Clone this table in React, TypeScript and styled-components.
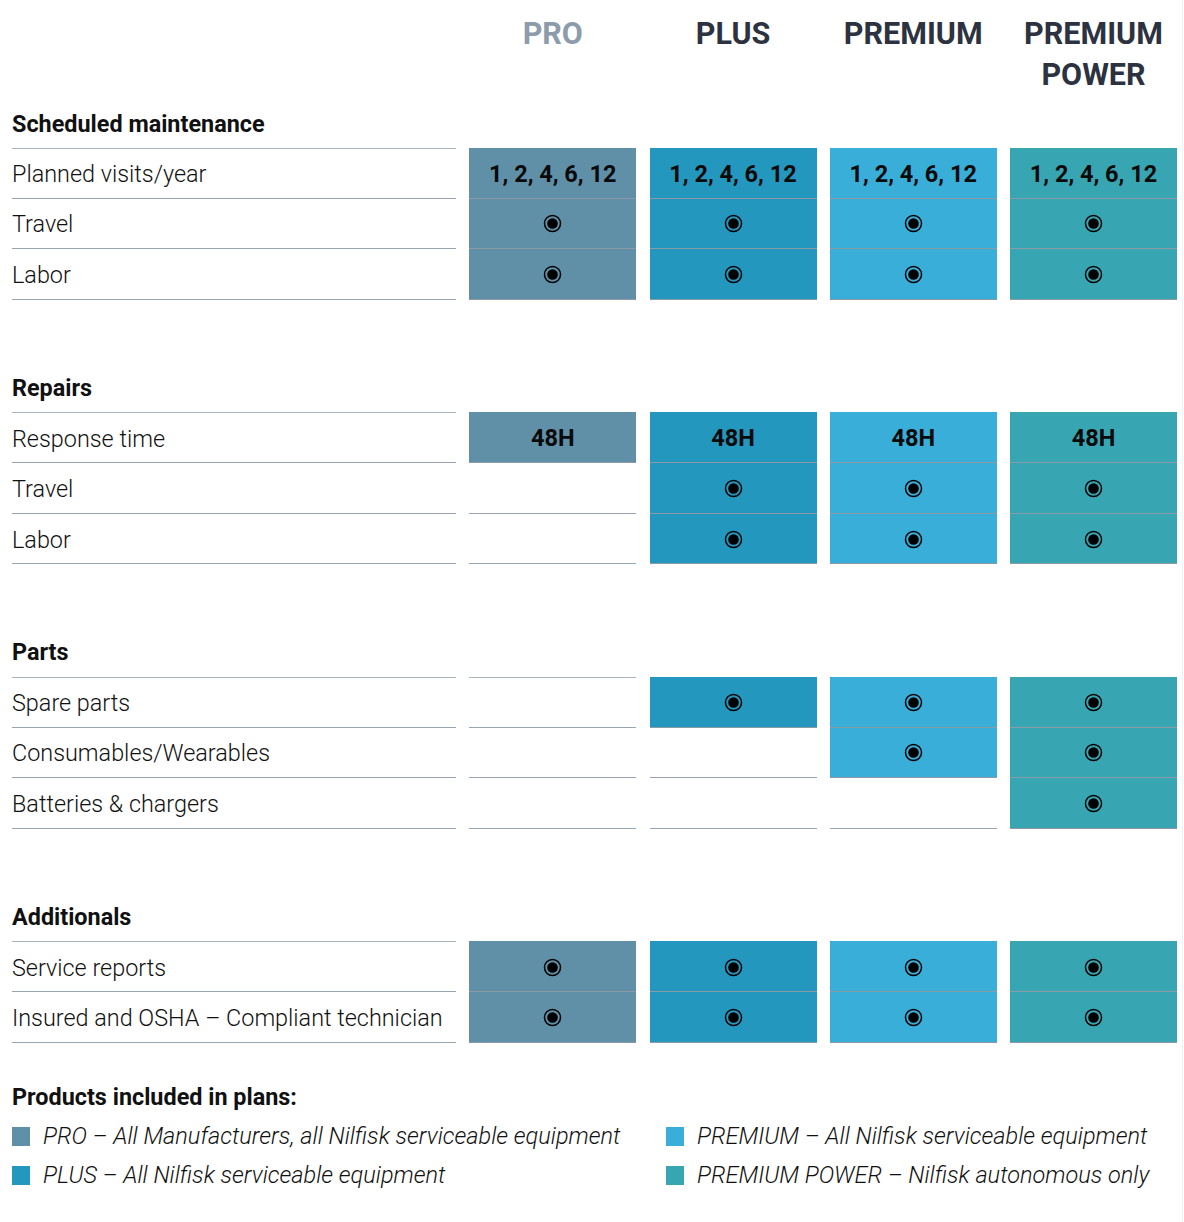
import React from "react";
import styled, { createGlobalStyle } from "styled-components";

const Global = createGlobalStyle`
  html, body { margin: 0; padding: 0; background: #ffffff; }
  body { font-family: Roboto, "Liberation Sans", Arial, sans-serif; color: #111; }
`;

type Plan = "pro" | "plus" | "premium" | "power";
const planColor: Record<Plan, string> = {
  pro: "#6090a7",
  plus: "#2497bf",
  premium: "#39aed9",
  power: "#38a6b2",
};
const plans: Plan[] = ["pro", "plus", "premium", "power"];

const Page = styled.div`
  width: 1184px;
  padding: 13px 0 30px 12px;
  box-sizing: border-box;
  position: relative;
`;

const Grid = styled.div`
  display: grid;
  grid-template-columns: 444px repeat(4, 167px);
  column-gap: 13.25px;
`;

const HeaderCell = styled.div<{ $muted?: boolean }>`
  font-weight: 700;
  font-size: 30.5px;
  line-height: 41px;
  text-align: center;
  color: ${(p) => (p.$muted ? "#8c9cab" : "#2d3240")};
  height: 85px;
`;

const Section = styled.div<{ $first?: boolean }>`
  margin-top: ${(p) => (p.$first ? "0" : "62.5px")};
`;

const SectionTitle = styled.div`
  height: 50px;
  padding-top: 1px;
  box-sizing: border-box;
  display: flex;
  align-items: center;
  font-weight: 700;
  font-size: 23.4px;
  color: #111;
`;

const Column = styled.div`
  display: flex;
  flex-direction: column;
`;

const LabelCell = styled.div<{ $first?: boolean }>`
  height: 50.67px;
  padding-top: 2px;
  box-sizing: border-box;
  display: flex;
  align-items: center;
  font-size: 23.4px;
  font-weight: 300;
  color: #111;
  border-bottom: 1px solid #97a4b1;
  ${(p) => (p.$first ? "border-top: 1px solid #aab4be;" : "")}
`;

const ValueCell = styled.div<{ $bg?: string; $first?: boolean }>`
  height: 50.67px;
  padding-top: 1px;
  box-sizing: border-box;
  display: flex;
  align-items: center;
  justify-content: center;
  background: ${(p) => p.$bg ?? "transparent"};
  font-weight: 700;
  font-size: 23.5px;
  color: #0a0a0a;
  border-bottom: 1px solid ${(p) => (p.$bg ? "#8d9aa6" : "#97a4b1")};
  ${(p) => (p.$first ? `border-top: 1px solid ${p.$bg ? p.$bg : "#aab4be"};` : "")}
`;

const Legend = styled.div`
  margin-top: 34px;
`;

const LegendTitle = styled.div`
  font-weight: 700;
  font-size: 23.4px;
  height: 40px;
  display: flex;
  align-items: center;
  color: #111;
`;

const LegendGrid = styled.div`
  display: grid;
  grid-template-columns: 654px auto;
`;

const LegendItem = styled.div`
  display: flex;
  align-items: center;
  height: 39px;
  gap: 13px;
  font-style: italic;
  font-weight: 300;
  font-size: 23.5px;
  color: #111;
`;

const Swatch = styled.span<{ $bg: string }>`
  width: 18px;
  height: 19px;
  background: ${(p) => p.$bg};
  flex: none;
`;

const EdgeLine = styled.div`
  position: absolute;
  top: 0;
  right: 1px;
  width: 1px;
  height: 100%;
  background: #f1f3f5;
`;

const Dot = () => (
  <svg width="19" height="19" viewBox="0 0 18 18" aria-hidden>
    <circle cx="9" cy="9" r="7.6" fill="none" stroke="#000" strokeWidth="1.4" />
    <circle cx="9" cy="9" r="5" fill="#000" />
  </svg>
);

type Val = null | "dot" | string;
type Row = { label: string; values: Val[] };
type Sec = { title: string; rows: Row[] };

const D = "dot";
const visits = "1, 2, 4, 6, 12";
const sections: Sec[] = [
  {
    title: "Scheduled maintenance",
    rows: [
      { label: "Planned visits/year", values: [visits, visits, visits, visits] },
      { label: "Travel", values: [D, D, D, D] },
      { label: "Labor", values: [D, D, D, D] },
    ],
  },
  {
    title: "Repairs",
    rows: [
      { label: "Response time", values: ["48H", "48H", "48H", "48H"] },
      { label: "Travel", values: [null, D, D, D] },
      { label: "Labor", values: [null, D, D, D] },
    ],
  },
  {
    title: "Parts",
    rows: [
      { label: "Spare parts", values: [null, D, D, D] },
      { label: "Consumables/Wearables", values: [null, null, D, D] },
      { label: "Batteries & chargers", values: [null, null, null, D] },
    ],
  },
  {
    title: "Additionals",
    rows: [
      { label: "Service reports", values: [D, D, D, D] },
      { label: "Insured and OSHA – Compliant technician", values: [D, D, D, D] },
    ],
  },
];

export default function App() {
  return (
    <Page>
      <Global />
      <EdgeLine />
      <Grid>
        <div />
        <HeaderCell $muted>PRO</HeaderCell>
        <HeaderCell>PLUS</HeaderCell>
        <HeaderCell>PREMIUM</HeaderCell>
        <HeaderCell>
          PREMIUM
          <br />
          POWER
        </HeaderCell>
      </Grid>
      {sections.map((s, si) => (
        <Section key={s.title} $first={si === 0}>
          <SectionTitle>{s.title}</SectionTitle>
          <Grid>
            <Column>
              {s.rows.map((r, ri) => (
                <LabelCell key={ri} $first={ri === 0}>
                  {r.label}
                </LabelCell>
              ))}
            </Column>
            {plans.map((p, pi) => (
              <Column key={p}>
                {s.rows.map((r, ri) => {
                  const v = r.values[pi];
                  return (
                    <ValueCell key={ri} $first={ri === 0} $bg={v ? planColor[p] : undefined}>
                      {v === "dot" ? <Dot /> : v}
                    </ValueCell>
                  );
                })}
              </Column>
            ))}
          </Grid>
        </Section>
      ))}
      <Legend>
        <LegendTitle>Products included in plans:</LegendTitle>
        <LegendGrid>
          <LegendItem>
            <Swatch $bg={planColor.pro} />
            PRO – All Manufacturers, all Nilfisk serviceable equipment
          </LegendItem>
          <LegendItem>
            <Swatch $bg={planColor.premium} />
            PREMIUM – All Nilfisk serviceable equipment
          </LegendItem>
          <LegendItem>
            <Swatch $bg={planColor.plus} />
            PLUS – All Nilfisk serviceable equipment
          </LegendItem>
          <LegendItem>
            <Swatch $bg={planColor.power} />
            PREMIUM POWER – Nilfisk autonomous only
          </LegendItem>
        </LegendGrid>
      </Legend>
    </Page>
  );
}
